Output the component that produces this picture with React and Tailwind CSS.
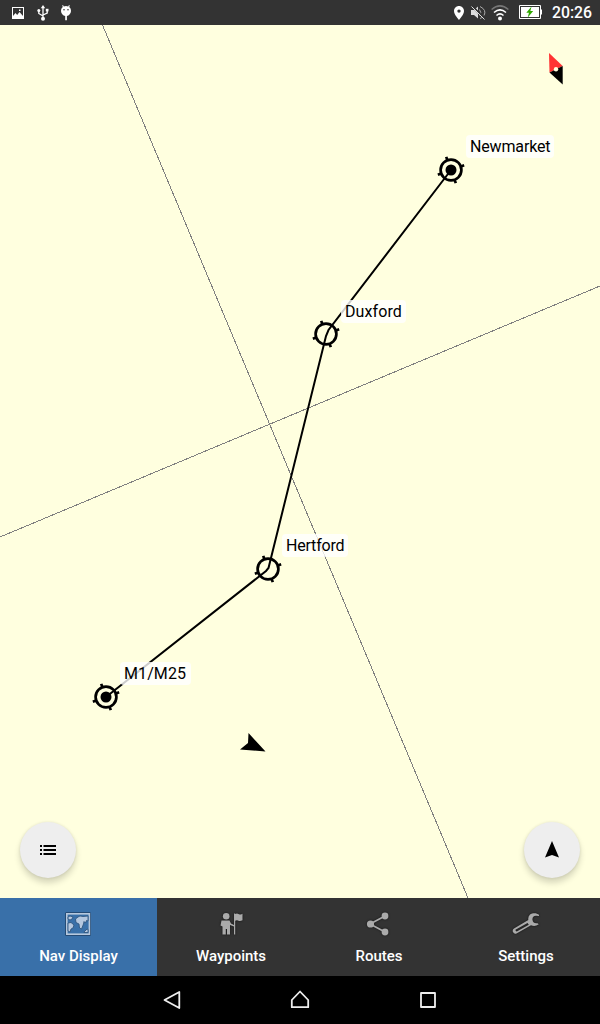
import React from 'react';

const waypoints = [
  { name: 'Newmarket', x: 451, y: 170, end: true, box: 'left-[466px] top-[110px] w-[88px] tracking-[-0.15px]' },
  { name: 'Duxford', x: 326, y: 334, end: false, box: 'left-[341px] top-[275px] w-[65px] tracking-[0.1px]' },
  { name: 'Hertford', x: 268, y: 569, end: false, box: 'left-[282px] top-[509px] w-[66px] tracking-[-0.2px]' },
  { name: 'M1/M25', x: 106, y: 697, end: true, box: 'left-[120px] top-[637px] w-[71px] tracking-[0.1px]' },
];

function StatusBar() {
  return (
    <header className="flex h-[25px] shrink-0 items-center justify-between bg-[#333333] pr-2 pl-3">
      <div className="flex items-center">
        <svg width="12" height="12" viewBox="0 0 12 12">
          <path fill="#fff" fillRule="evenodd" d="M0 0H12V12H0ZM1 1V9L3.5 6L5.2 8L7.5 5L11 9V1ZM7 2.5H8.5V4H7Z" />
        </svg>
        <svg width="12" height="16" viewBox="0 0 12 16" fill="none" stroke="#fff" strokeWidth="1.3" className="ml-[13px]">
          <path d="M6 2V13M6 11L1.8 8.5V5.5M6 10L10.2 8V5" />
          <path d="M6 0L8.2 3.2H3.8Z" fill="#fff" stroke="none" />
          <circle cx="6" cy="13.7" r="2" fill="#fff" stroke="none" />
          <circle cx="1.8" cy="5.5" r="1.5" fill="#fff" stroke="none" />
          <path d="M8.8 3.8h2.7v2.6H8.8Z" fill="#fff" stroke="none" />
        </svg>
        <svg width="10" height="16" viewBox="0 0 10 16" className="ml-3">
          <path fill="#fff" d="M0 6C0 4 .8 2.8 1.8 2L1.2 .4 2 0 2.8 1.4Q5 .6 7.2 1.4L8 0 8.8.4 8.2 2C9.3 2.8 10 4 10 6C10 8.6 8 10.6 5.9 11V15.3H4.2V11C2 10.6 0 8.6 0 6Z" />
          <circle cx="3" cy="4.7" r=".8" fill="#333" />
          <circle cx="7" cy="4.7" r=".8" fill="#333" />
        </svg>
      </div>
      <div className="flex items-center">
        <svg width="10" height="14" viewBox="0 0 10 14" className="mr-[7px]">
          <path fill="#fff" fillRule="evenodd" d="M5 0C2.2 0 0 2.2 0 5C0 8.5 5 14 5 14S10 8.5 10 5C10 2.2 7.8 0 5 0ZM5 3.4A1.7 1.7 0 1 1 5 6.8A1.7 1.7 0 1 1 5 3.4Z" />
        </svg>
        <svg width="15" height="15" viewBox="0 0 15 15" className="mr-[5px]" fill="none" stroke="#aaa">
          <path d="M0 5H3L7 1.5V13.5L3 10H0Z" fill="#ddd" stroke="none" />
          <path d="M8.5 4.5Q11 7.5 8.5 10.5M9 1.5Q16 5 13 10.5M9 13.5L11 12.5" />
          <path d="M1 1L14 14" stroke="#333" strokeWidth="2.2" />
          <path d="M.5 1.5L13.5 14.5" stroke="#ddd" />
        </svg>
        <svg width="18" height="16" viewBox="0 0 18 16" className="mr-[10px]" fill="none" strokeWidth="1.5">
          <path d="M.6 4.5Q9-2.7 17.4 4.5" stroke="#777" />
          <path d="M3 7.5Q9 2.2 15 7.5M5.5 10.5Q9 7.2 12.5 10.5" stroke="#fff" />
          <circle cx="9" cy="13.5" r="2" fill="#fff" />
        </svg>
        <svg width="23" height="14" viewBox="0 0 23 14" className="mr-[10px] mb-[2px]">
          <path d="M.5 .5H21.5V13.5H.5Z" fill="#333" stroke="#fff" />
          <path d="M2 2H20V12H2ZM22 4.5h1v5h-1Z" fill="#fff" />
          <path d="M12.5 1.5L7.3 7.7H10L8.6 12.8L14.2 6H11.4Z" fill="#30a800" />
        </svg>
        <span className="w-[40px] text-[15.8px] leading-6 font-medium whitespace-nowrap text-white">20:26</span>
      </div>
    </header>
  );
}

function Waypoint({ x, y, end }) {
  return (
    <g transform={`translate(${x} ${y})`} stroke="#000" fill="none" strokeWidth="2.7">
      <circle r="10.4" />
      <path d="M0-10.5V-14M0 10.5V14M-10.5 0H-14M10.5 0H14" transform="rotate(-20)" />
      {end && <circle r="5.5" fill="#000" stroke="none" />}
    </g>
  );
}

function FloatingButton({ label, children }) {
  return (
    <button
      aria-label={label}
      className="flex size-14 items-center justify-center rounded-full bg-[#eeeeee] shadow-[0_5px_6px_rgba(0,0,0,0.16),0_0_3px_rgba(0,0,0,0.10)]"
    >
      {children}
    </button>
  );
}

function MapView() {
  return (
    <main className="relative flex h-[873px] shrink-0 flex-col justify-end overflow-hidden bg-[#ffffdf]">
      <svg className="absolute inset-0" width="600" height="873" viewBox="0 25 600 873">
        <g stroke="#808080" strokeWidth="1" shapeRendering="crispEdges">
          <path d="M102.5 25L468 898M0 537L600 286" />
        </g>
        <path d="M451 170L328.5 330L326 336L268.5 568L266 571L106 697" fill="none" stroke="#000" strokeWidth="2" />
        {waypoints.map((w) => (
          <Waypoint key={w.name} {...w} />
        ))}
        <path d="M248.5 733L265.5 751.5L240 749.5L248 743Z" fill="#000" />
        <path d="M549 53L562.7 66L549.5 72.5Z" fill="#ff3333" />
        <path d="M549.5 72.5L562.7 66V84.5Z" fill="#000" />
        <circle cx="556" cy="69.2" r="2.2" fill="#ffffdf" />
      </svg>
      {waypoints.map((w) => (
        <span
          key={w.name}
          className={`absolute h-[23px] rounded-[4px] bg-white/80 px-1 text-[16px] leading-[23px] whitespace-nowrap text-black ${w.box}`}
        >
          {w.name}
        </span>
      ))}
      <div className="relative flex justify-between px-5 pb-[20.5px]">
        <FloatingButton label="List">
          <svg width="16" height="10" viewBox="0 0 16 10" fill="#000">
            <path d="M0 0h2v2H0zM3.5 0H16v2H3.5zM0 4h2v2H0zM3.5 4H16v2H3.5zM0 8h2v2H0zM3.5 8H16v2H3.5z" />
          </svg>
        </FloatingButton>
        <FloatingButton label="Orientation">
          <svg width="14" height="17" viewBox="0 0 14 17">
            <path d="M7 0L14 16.5L7 14L0 16.5Z" />
          </svg>
        </FloatingButton>
      </div>
    </main>
  );
}

function MapIcon() {
  return (
    <svg width="28" height="26" viewBox="0 0 28 26" className="-translate-x-px">
      <rect x="1" y="1" width="26" height="24" rx="1.5" fill="#254b75" />
      <rect x="2.8" y="2.8" width="22.6" height="20.4" fill="#3970a9" stroke="#b7c8dd" strokeWidth="1.6" />
      <g fill="#b4c7df" stroke="#294f78" strokeWidth=".8">
        <path d="M4 6L6 5 9 6 8 8 6 9 4 8ZM4 12L7 11.5 10 14 9 17 7 18 6 21 4 20Z" />
        <path d="M11.5 8L14 6 16 5 19 5.5 24 5V10L22.5 9.5 21.5 12 20 10.5 19.5 13 17.5 18 15.5 17 15 13 12 11.5Z" />
        <path d="M20 21L23 18 24 18.5V21.5H20Z" />
      </g>
    </svg>
  );
}

function WaypointIcon() {
  return (
    <svg width="28" height="26" viewBox="0 0 28 26" fill="#aaa" className="drop-shadow-[0_0_1px_#111]">
      <circle cx="9.2" cy="5.2" r="3.3" />
      <path d="M4.5 9.5H12.5L14 12.5 17 14V2.5H18.2V3Q20 2 22 3.2Q24 4 25.5 2.8V9.2Q23 10.7 21 9.5Q19.5 8.8 18.2 9.8V23.5H17V15.5L13 14V23.5H10V18H8.8V23.5H5.5V15.5L3.5 14.5Z" />
    </svg>
  );
}

function RoutesIcon() {
  return (
    <svg width="28" height="26" viewBox="0 0 28 26" fill="#aaa" className="-translate-x-px drop-shadow-[0_0_1px_#111]">
      <path d="M21 5L6 13L21 21" fill="none" stroke="#aaa" strokeWidth="1.7" />
      <circle cx="21" cy="5" r="3.4" />
      <circle cx="6.5" cy="13" r="3.6" />
      <circle cx="21" cy="21" r="3.4" />
    </svg>
  );
}

function SettingsIcon() {
  return (
    <svg width="28" height="26" viewBox="0 0 28 26" className="drop-shadow-[0_0_1px_#111]">
      <path
        fill="#aaa"
        fillRule="evenodd"
        d="M27 3.8C25 1.8 20.5 1.6 18 3.5Q15.8 5.5 16.3 9L2 17.5Q0 18.8 1 21Q2 23.4 4.5 22.5L19 14.2Q23 16 26.8 13.2L25.5 12.2Q21.3 13 20.5 9Q20 5 24 4.7L27 5ZM3.5 18.8L15.5 12.1 16.8 13.7 4.8 20.5Q3.4 20.5 3.5 18.8Z"
      />
    </svg>
  );
}

const tabs = [
  { label: 'Nav Display', Icon: MapIcon, color: 'bg-[#3970a9]' },
  { label: 'Waypoints', Icon: WaypointIcon, color: '' },
  { label: 'Routes', Icon: RoutesIcon, color: '' },
  { label: 'Settings', Icon: SettingsIcon, color: 'pr-px' },
];

export default function App() {
  return (
    <div className="flex h-[1024px] w-[600px] flex-col overflow-hidden bg-black font-['Roboto',sans-serif]">
      <StatusBar />
      <MapView />
      <nav className="grid h-[78px] shrink-0 grid-cols-[157px_148px_148px_147px] bg-[#333333]">
        {tabs.map(({ label, Icon, color }) => (
          <button key={label} className={`flex flex-col items-center pt-[13px] ${color}`}>
            <Icon />
            <span className="mt-[7px] text-[15px] leading-6 font-medium whitespace-nowrap text-white">{label}</span>
          </button>
        ))}
      </nav>
      <footer className="flex h-12 shrink-0 items-center justify-center gap-[104px]">
        <svg width="24" height="24" viewBox="0 0 24 24" fill="none" stroke="#eee" strokeWidth="1.8" strokeLinejoin="round">
          <path d="M19.3 4V20L4.5 12Z" />
        </svg>
        <svg width="24" height="24" viewBox="0 0 24 24" fill="none" stroke="#eee" strokeWidth="1.8" strokeLinejoin="round">
          <path d="M12 3.5L20.2 12V19.2H3.8V12Z" />
        </svg>
        <svg width="24" height="24" viewBox="0 0 24 24" fill="none" stroke="#eee" strokeWidth="1.8" strokeLinejoin="round">
          <path d="M5 5H19V19H5Z" />
        </svg>
      </footer>
    </div>
  );
}
